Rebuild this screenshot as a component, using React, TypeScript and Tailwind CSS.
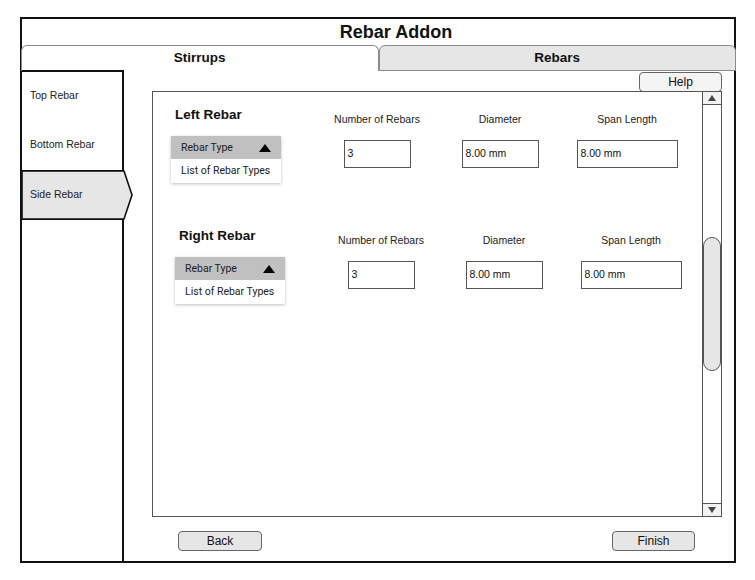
const arial = "font-['Liberation_Sans',Arial,sans-serif]";
const roboto = "font-['Roboto','Liberation_Sans',sans-serif]";

function Dropdown() {
  return (
    <div className={`w-[110px] shadow-[0_1px_3px_rgba(0,0,0,0.25)] ${roboto} text-[10.5px] text-[#222]`}>
      <div className="flex h-[23px] items-center justify-between bg-[#c0c0c0] pl-[10px] pr-[10px]">
        <span>Rebar Type</span>
        <svg width="12" height="8" viewBox="0 0 12 8">
          <path d="M0 8 L6 0 L12 8 Z" fill="#000" />
        </svg>
      </div>
      <div className="flex h-[24px] items-center bg-white pl-[10px]">List of Rebar Types</div>
    </div>
  );
}

function Field({ label, value, width, ml }: { label: string; value: string; width: string; ml: string }) {
  return (
    <div className={`flex w-[120px] flex-col items-center ${ml}`}>
      <div className="mt-[6px] h-[14px] text-[10.5px] leading-[14px] text-[#222]">{label}</div>
      <div
        className={`mt-[14px] flex h-[28px] items-center border border-[#555] pl-[3px] text-[10.5px] text-[#111] ${width}`}
      >
        {value}
      </div>
    </div>
  );
}

function RebarSection({ title, shift }: { title: string; shift: string }) {
  return (
    <div className={`flex items-start ${shift}`}>
      <div className="flex w-[110px] flex-col">
        <div className="ml-[4px] mt-px h-[16px] text-[13.5px] font-bold leading-[16px] text-[#111]">{title}</div>
        <div className="mt-[13px]">
          <Dropdown />
        </div>
      </div>
      <Field label="Number of Rebars" value="3" width="w-[67px]" ml="ml-[36px]" />
      <Field label="Diameter" value="8.00 mm" width="w-[77px]" ml="ml-[3px]" />
      <Field label="Span Length" value="8.00 mm" width="w-[101px]" ml="ml-[7px]" />
    </div>
  );
}

function Scrollbar() {
  return (
    <div className="flex w-[19px] flex-col border-l border-[#555]">
      <div className="flex h-[13px] items-center justify-center border-b border-[#555] bg-[#f2f2f2]">
        <svg width="8" height="6" viewBox="0 0 8 6">
          <path d="M0 6 L4 0 L8 6 Z" fill="#444" />
        </svg>
      </div>
      <div className="flex flex-1 flex-col">
        <div className="h-[132px]" />
        <div className="h-[134px] rounded-full border border-[#555] bg-[#e6e6e6]" />
      </div>
      <div className="flex h-[13px] items-center justify-center border-t border-[#555] bg-[#f2f2f2]">
        <svg width="8" height="6" viewBox="0 0 8 6">
          <path d="M0 0 L8 0 L4 6 Z" fill="#444" />
        </svg>
      </div>
    </div>
  );
}

function SideItem({ label, h, selected }: { label: string; h?: string; selected?: boolean }) {
  if (selected) {
    return (
      <div className="relative h-[50px] border-y-2 border-black">
        <svg className="absolute left-0 top-[-2px]" width="112" height="50" viewBox="0 0 112 50">
          <path d="M0 1 L102 1 L110 25 L102 49 L0 49 Z" fill="#e6e6e6" stroke="#111" strokeWidth="1.6" />
        </svg>
        <span className="relative z-10 flex h-full items-center pl-[8px] text-[10.5px] text-[#222]">{label}</span>
      </div>
    );
  }
  return <div className={`flex items-center pl-[8px] text-[10.5px] text-[#222] ${h}`}>{label}</div>;
}

export default function App() {
  return (
    <div className={`h-[580px] w-[755px] bg-white pl-[20px] pt-[17px] ${arial}`}>
      <div className="flex h-[546px] w-[716px] flex-col border-2 border-[#111]">
        <div className="flex h-[26px] items-center justify-center pl-[36px] text-[18px] font-bold text-[#111]">
          Rebar Addon
        </div>
        <div className="-ml-px -mr-[2px] flex h-[26px]">
          <div className="flex flex-1 items-center justify-center rounded-t-[6px] border border-b-0 border-[#8c8c8c] bg-white text-[13.5px] font-bold text-[#111]">
            Stirrups
          </div>
          <div className="flex flex-1 items-center justify-center rounded-t-[6px] border border-[#8c8c8c] bg-[#e6e6e6] text-[13.5px] font-bold text-[#111]">
            Rebars
          </div>
        </div>
        <div className="flex flex-1">
          <div className="relative z-10 -mt-px flex w-[102px] flex-col border-r-2 border-t-2 border-[#111]">
            <SideItem label="Top Rebar" h="h-[47px]" />
            <SideItem label="Bottom Rebar" h="h-[51px]" />
            <SideItem label="Side Rebar" selected />
          </div>
          <div className="flex flex-1 flex-col pl-[28px] pr-[12px] pt-px">
            <div className="-mb-px flex justify-end">
              <button className="h-[20px] w-[83px] rounded-[4px] border border-[#666] bg-[#f4f4f4] text-[12px] text-[#111]">
                Help
              </button>
            </div>
            <div className="flex h-[426px] border border-[#555]">
              <div className="flex flex-1 flex-col pl-[18px] pt-[14px]">
                <RebarSection title="Left Rebar" shift="" />
                <div className="h-[44px]" />
                <RebarSection title="Right Rebar" shift="ml-[4px]" />
              </div>
              <Scrollbar />
            </div>
            <div className="mt-[14px] flex justify-between pl-[26px] pr-[27px]">
              <button className="h-[20px] w-[84px] rounded-[4px] border border-[#666] bg-[#e6e6e6] text-[12px] text-[#111]">
                Back
              </button>
              <button className="h-[20px] w-[83px] rounded-[4px] border border-[#666] bg-[#e6e6e6] text-[12px] text-[#111]">
                Finish
              </button>
            </div>
          </div>
        </div>
      </div>
    </div>
  );
}
